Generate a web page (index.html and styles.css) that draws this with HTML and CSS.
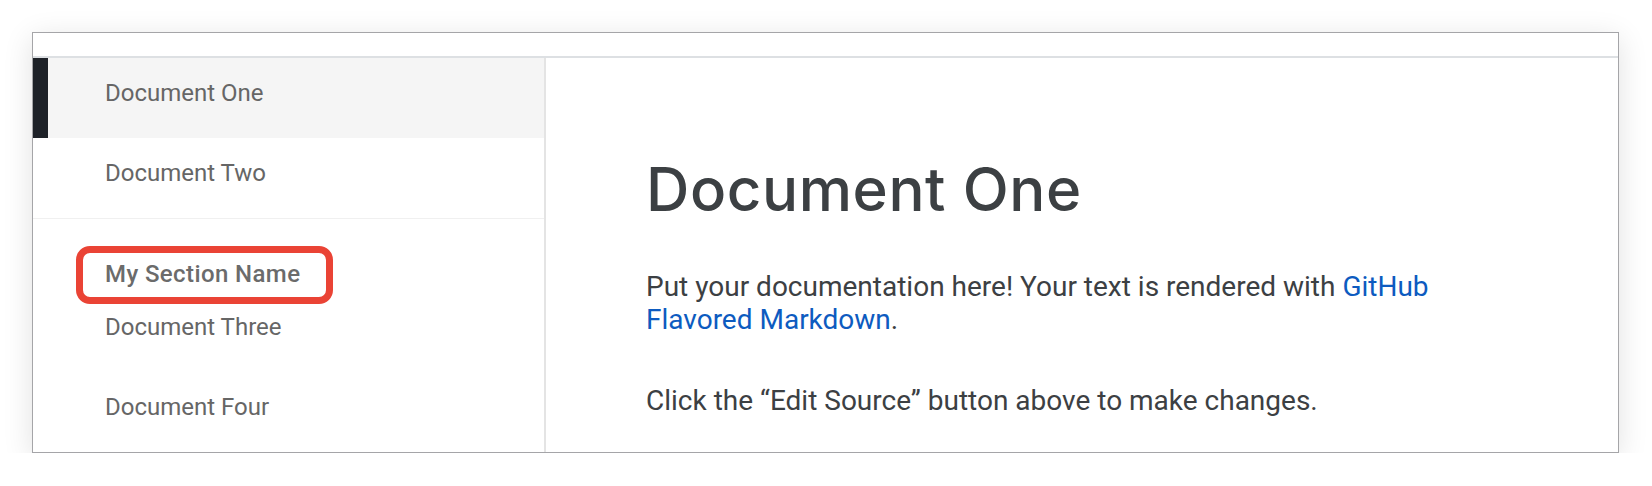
FILE: index.html
```html
<!DOCTYPE html>
<html lang="en">
	<head>
		<meta charset="UTF-8" />
		<meta name="viewport" content="width=device-width, initial-scale=1.0" />
		<title>Document One</title>
		<link rel="stylesheet" href="styles.css">
	</head>
	<body>
		<div class="frame">
			<div class="topbar"></div>
			<div class="layout">
				<nav class="sidebar">
					<a class="nav-item active" href="#">Document One</a>
					<a class="nav-item" href="#">Document Two</a>
					<div class="section">
						<div class="section-title"><span class="highlight">My Section Name</span></div>
						<a class="nav-item" href="#">Document Three</a>
						<a class="nav-item" href="#">Document Four</a>
					</div>
				</nav>
				<main class="content">
					<h1>Document One</h1>
					<p>Put your documentation here! Your text is rendered with <a href="#">GitHub Flavored Markdown</a>.</p>
					<p>Click the &ldquo;Edit Source&rdquo; button above to make changes.</p>
				</main>
			</div>
		</div>
	</body>
</html>
```

FILE: styles.css
```css
body {
	margin: 0;
	background: #fff;
	font-family: Roboto, "Liberation Sans", sans-serif;
}
.frame {
	margin: 32px 33px 0 32px;
	border: 1px solid #a5a5a8;
	background: #fff;
	box-shadow: 0 6px 28px rgba(0, 0, 0, 0.12);
}
.topbar {
	height: 23px;
	border-bottom: 2px solid #dde0e3;
}
.layout {
	display: flex;
}
.sidebar {
	width: 511px;
	flex-shrink: 0;
	border-right: 2px solid #e4e4e4;
}
.nav-item {
	display: block;
	height: 80px;
	box-sizing: border-box;
	padding: 19px 0 0 72px;
	font-size: 24px;
	line-height: 32px;
	color: #666;
	text-decoration: none;
}
.nav-item.active {
	background: #f5f5f5;
	border-left: 15px solid #1e2228;
	padding-left: 57px;
}
.nav-item + .section {
	border-top: 1px solid #f0f0f0;
}
.section {
	padding-top: 39px;
}
.section-title {
	padding-left: 72px;
	margin-bottom: 2px;
	font-size: 24px;
	line-height: 32px;
	font-weight: 500;
	letter-spacing: 0.4px;
	color: #6b6b6b;
}
.highlight {
	position: relative;
	display: inline-block;
}
.highlight::after {
	content: "";
	position: absolute;
	top: -12px;
	left: -29px;
	width: 257px;
	height: 58px;
	box-sizing: border-box;
	border: 7px solid #ea4335;
	border-radius: 14px;
}
.content {
	flex: 1;
	padding: 95px 40px 0 100px;
	color: #3c4043;
}
h1 {
	margin: 0 0 45px;
	font-family: Inter, "Open Sans", sans-serif;
	font-size: 60px;
	line-height: 72px;
	font-weight: 500;
	letter-spacing: 0.6px;
	color: #3c4043;
}
p {
	max-width: 820px;
	margin: 0 0 48px;
	font-size: 28px;
	line-height: 33px;
}
p:last-child {
	margin-bottom: 0;
}
p a {
	color: #0d5bc0;
	text-decoration: none;
}
```
